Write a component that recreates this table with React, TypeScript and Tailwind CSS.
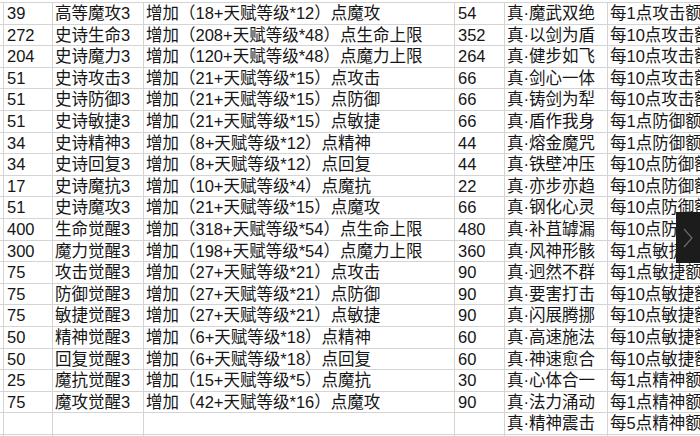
import React from "react";

type Row = [string, string, string, string, string, string];

const rows: Row[] = [
	["39", "高等魔攻3", "增加（18+天赋等级*12）点魔攻", "54", "真·魔武双绝", "每1点攻击额外增加"],
	["272", "史诗生命3", "增加（208+天赋等级*48）点生命上限", "352", "真·以剑为盾", "每10点攻击额外增加"],
	["204", "史诗魔力3", "增加（120+天赋等级*48）点魔力上限", "264", "真·健步如飞", "每10点攻击额外增加"],
	["51", "史诗攻击3", "增加（21+天赋等级*15）点攻击", "66", "真·剑心一体", "每10点攻击额外增加"],
	["51", "史诗防御3", "增加（21+天赋等级*15）点防御", "66", "真·铸剑为犁", "每10点攻击额外增加"],
	["51", "史诗敏捷3", "增加（21+天赋等级*15）点敏捷", "66", "真·盾作我身", "每1点防御额外增加"],
	["34", "史诗精神3", "增加（8+天赋等级*12）点精神", "44", "真·熔金魔咒", "每1点防御额外增加"],
	["34", "史诗回复3", "增加（8+天赋等级*12）点回复", "44", "真·铁壁冲压", "每10点防御额外增加"],
	["17", "史诗魔抗3", "增加（10+天赋等级*4）点魔抗", "22", "真·亦步亦趋", "每10点防御额外增加"],
	["51", "史诗魔攻3", "增加（21+天赋等级*15）点魔攻", "66", "真·钢化心灵", "每10点防御额外增加"],
	["400", "生命觉醒3", "增加（318+天赋等级*54）点生命上限", "480", "真·补苴罅漏", "每10点防御额外增加"],
	["300", "魔力觉醒3", "增加（198+天赋等级*54）点魔力上限", "360", "真·风神形骸", "每1点敏捷额外增加"],
	["75", "攻击觉醒3", "增加（27+天赋等级*21）点攻击", "90", "真·迥然不群", "每1点敏捷额外增加"],
	["75", "防御觉醒3", "增加（27+天赋等级*21）点防御", "90", "真·要害打击", "每10点敏捷额外增加"],
	["75", "敏捷觉醒3", "增加（27+天赋等级*21）点敏捷", "90", "真·闪展腾挪", "每10点敏捷额外增加"],
	["50", "精神觉醒3", "增加（6+天赋等级*18）点精神", "60", "真·高速施法", "每10点敏捷额外增加"],
	["50", "回复觉醒3", "增加（6+天赋等级*18）点回复", "60", "真·神速愈合", "每10点敏捷额外增加"],
	["25", "魔抗觉醒3", "增加（15+天赋等级*5）点魔抗", "30", "真·心体合一", "每1点精神额外增加"],
	["75", "魔攻觉醒3", "增加（42+天赋等级*16）点魔攻", "90", "真·法力涌动", "每1点精神额外增加"],
	["", "", "", "", "真·精神震击", "每5点精神额外增加"],
	["", "", "", "", "", ""],
];

const cell = "border-r border-[#d4d4d4] whitespace-nowrap overflow-hidden leading-[21px]";

export default function App() {
	return (
		<div
			className="relative w-[700px] h-[436px] overflow-hidden bg-white text-[16.5px] text-[#161616]"
			style={{ fontFamily: "'Liberation Sans', 'Noto Sans CJK SC', sans-serif" }}
		>
			<div className="h-[2px] border-b border-[#d4d4d4] box-content" />
			{rows.map((r, i) => (
				<div
					key={i}
					className="grid grid-cols-[4px_49px_91px_311px_50px_103px_1fr] h-[21.6px] border-b border-[#d4d4d4]"
				>
					<div className={cell} />
					<div className={cell + " pl-[3px]"}>{r[0]}</div>
					<div className={cell + " pl-[2px]"}>{r[1]}</div>
					<div className={cell + " pl-[2px]"}>{r[2]}</div>
					<div className={cell + " pl-[3px]"}>{r[3]}</div>
					<div className={cell + " pl-[2px]"}>{r[4]}</div>
					<div className="whitespace-nowrap overflow-hidden leading-[21px] pl-[2px]">{r[5]}</div>
				</div>
			))}
			<div className="absolute right-0 top-[212px] w-[24px] h-[51px] bg-[#1c1c1c] flex items-center justify-center">
				<svg width="12" height="22" viewBox="0 0 12 22" fill="none">
					<path d="M2 2 L10 11 L2 20" stroke="#6b6b6b" strokeWidth="1.2" />
				</svg>
			</div>
		</div>
	);
}
